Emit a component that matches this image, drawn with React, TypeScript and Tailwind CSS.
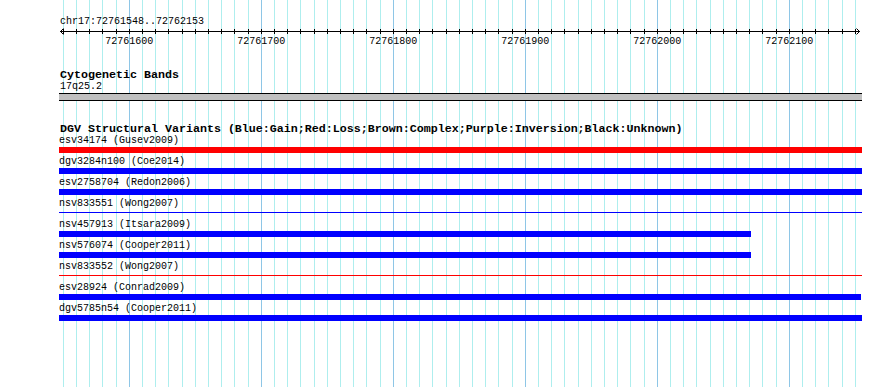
import React from 'react'

const START = 72761600
const PX_PER_BP = 1.32
const ORIGIN = 129.3

const toX = (bp: number) => ORIGIN + (bp - START) * PX_PER_BP

type Variant = {
  name: string
  study: string
  color: 'blue' | 'red'
  thin?: boolean
  width: number
}

const variants: Variant[] = [
  { name: 'esv34174', study: 'Gusev2009', color: 'red', width: 803 },
  { name: 'dgv3284n100', study: 'Coe2014', color: 'blue', width: 803 },
  { name: 'esv2758704', study: 'Redon2006', color: 'blue', width: 803 },
  { name: 'nsv833551', study: 'Wong2007', color: 'blue', thin: true, width: 803 },
  { name: 'nsv457913', study: 'Itsara2009', color: 'blue', width: 692 },
  { name: 'nsv576074', study: 'Cooper2011', color: 'blue', width: 692 },
  { name: 'nsv833552', study: 'Wong2007', color: 'red', thin: true, width: 803 },
  { name: 'esv28924', study: 'Conrad2009', color: 'blue', width: 802 },
  { name: 'dgv5785n54', study: 'Cooper2011', color: 'blue', width: 803 },
]

// every 10 bp from 72761550 to 72762150
const gridBps = Array.from({ length: 61 }, (_, i) => 72761550 + i * 10)
const majors = [72761600, 72761700, 72761800, 72761900, 72762000, 72762100]

function Grid() {
  return (
    <svg className="absolute inset-0 pointer-events-none" width={890} height={387}>
      {gridBps.map((bp) => {
        const x = Math.floor(toX(bp)) + 0.5
        const major = bp % 100 === 0
        return <line key={bp} x1={x} x2={x} y1={0} y2={387} stroke={major ? '#8ec6e6' : '#aeeeee'} strokeWidth={1} />
      })}
    </svg>
  )
}

function Ruler() {
  return (
    <svg className="block -ml-[59px]" width={890} height={20}>
      <line x1={60} x2={860} y1={4.5} y2={4.5} stroke="black" />
      <polyline points="63.5,1.5 60.5,4.5 63.5,7.5" fill="none" stroke="black" />
      <polyline points="856.5,1.5 859.5,4.5 856.5,7.5" fill="none" stroke="black" />
      {gridBps.map((bp) => {
        const x = Math.floor(toX(bp)) + 0.5
        return <line key={bp} x1={x} x2={x} y1={2} y2={7} stroke="black" />
      })}
      {majors.map((bp) => (
        <text key={bp} x={toX(bp)} y={17} textAnchor="middle" fontSize={10} fill="black" fontFamily="'Liberation Mono', monospace">
          {bp}
        </text>
      ))}
    </svg>
  )
}

function VariantRow({ v }: { v: Variant }) {
  return (
    <div className="mb-[3px]">
      <div className="h-[11px] text-[10px] leading-[11px] whitespace-pre">
        {v.name} ({v.study})
      </div>
      <div className="mt-px h-[6px] flex flex-col">
        {v.thin ? (
          <div className={`mt-[2px] h-px ${v.color === 'red' ? 'bg-[#ff0000]' : 'bg-[#0000ff]'}`} style={{ width: v.width }} />
        ) : (
          <div className={`h-[6px] ${v.color === 'red' ? 'bg-[#ff0000]' : 'bg-[#0000ff]'}`} style={{ width: v.width }} />
        )}
      </div>
    </div>
  )
}

export default function App() {
  return (
    <div className="relative w-[890px] h-[387px] overflow-hidden bg-white text-black font-['Liberation_Mono',monospace]">
      <Grid />
      <div className="relative pl-[59px] pt-[16px]">
        <div className="h-[11px] text-[10px] leading-[11px] pl-px">chr17:72761548..72762153</div>
        <Ruler />

        <div className="mt-[22px] h-[12px] text-[11.67px] leading-[12px] font-bold pl-px">Cytogenetic Bands</div>
        <div className="h-[11px] text-[10px] leading-[11px] pl-px">17q25.2</div>
        <div className="mt-px w-[803px] h-[8px] border-t border-b border-black bg-[#c0c0c0]" />

        <div className="mt-[22px] h-[12px] text-[11.67px] leading-[12px] font-bold pl-px whitespace-pre">
          DGV Structural Variants (Blue:Gain;Red:Loss;Brown:Complex;Purple:Inversion;Black:Unknown)
        </div>
        <div className="pl-0">
          {variants.map((v) => (
            <VariantRow key={v.name} v={v} />
          ))}
        </div>
      </div>
    </div>
  )
}
